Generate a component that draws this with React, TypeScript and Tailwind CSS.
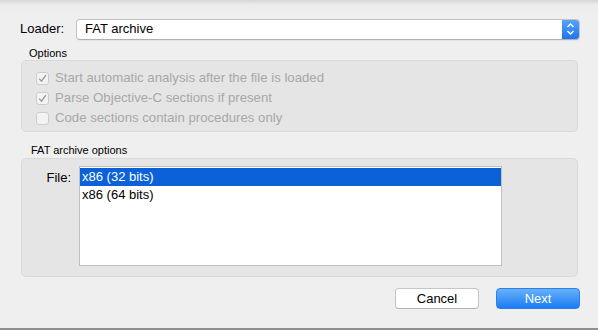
import { useState } from 'react';

const font = { fontFamily: '"Liberation Sans", Arial, sans-serif' };

function Check({ checked, label }: { checked: boolean; label: string }) {
  return (
    <div className="flex items-center h-[20px] gap-[6px]">
      <span className="w-[13px] h-[13px] rounded-[3px] border border-[#cdcdcd] bg-[#f3f3f3] flex items-center justify-center">
        {checked && (
          <svg width="9" height="9" viewBox="0 0 9 9">
            <path d="M1.2 4.6 L3.5 7.2 L7.9 1.2" fill="none" stroke="#9a9a9a" strokeWidth="1.4" />
          </svg>
        )}
      </span>
      <span className="text-[13.2px] leading-[16px] text-[#a8a8a8]">{label}</span>
    </div>
  );
}

export default function App() {
  const [selected, setSelected] = useState(0);
  const files = ['x86 (32 bits)', 'x86 (64 bits)'];

  return (
    <div
      style={font}
      className="w-[598px] h-[330px] overflow-hidden flex flex-col bg-[linear-gradient(to_bottom,#d6d6d6_0px,#ececec_5px,#efefef_12px)] border-b-2 border-[#8f8f8f] pl-[20px] pr-[18px] pt-[18px]"
    >
      {/* loader row */}
      <div className="flex items-center h-[22px]">
        <span className="text-[13px] text-black w-[56px]">Loader:</span>
        <div className="flex-1 h-[21px] flex items-center bg-white rounded-[4px] border border-[#c3c3c3] border-b-[#b0b0b0] shadow-[0_1px_0_rgba(0,0,0,0.04)] overflow-hidden">
          <span className="flex-1 pl-[8px] text-[13px] text-black">FAT archive</span>
          <div className="w-[17px] h-[22px] -my-px bg-[linear-gradient(to_bottom,#5ba9fb,#1a72ef)] flex items-center justify-center">
            <svg width="9" height="14" viewBox="0 0 9 14">
              <path d="M1.5 5 L4.5 2 L7.5 5 M1.5 9 L4.5 12 L7.5 9" fill="none" stroke="white" strokeWidth="1.4" />
            </svg>
          </div>
        </div>
      </div>

      {/* options */}
      <div className="mt-[7px] ml-[9px] text-[11px] leading-[13px] text-black">Options</div>
      <div className="mt-0 ml-px mr-[2px] h-[72px] rounded-[5px] bg-[#e5e5e5] border border-[#dadada] pl-[14px] pt-[7px]">
        <Check checked label="Start automatic analysis after the file is loaded" />
        <Check checked label="Parse Objective-C sections if present" />
        <Check checked={false} label="Code sections contain procedures only" />
      </div>

      {/* fat archive options */}
      <div className="mt-[12px] ml-[11px] text-[11px] leading-[13px] text-black">FAT archive options</div>
      <div className="mt-px ml-px mr-[2px] h-[119px] rounded-[5px] bg-[#e5e5e5] border border-[#dadada] flex pt-[7px]">
        <span className="w-[57px] text-right pr-[8px] text-[13px] text-black pt-[2px]">File:</span>
        <div className="w-[423px] h-[100px] bg-white border border-[#c0c0c0] pt-px">
          {files.map((f, i) => (
            <div
              key={f}
              onClick={() => setSelected(i)}
              className={
                i === selected
                  ? 'h-[18px] flex items-center pl-[2px] text-[13px] bg-[#0b62d8] text-white'
                  : 'h-[18px] flex items-center pl-[2px] text-[13px] text-black'
              }
            >
              {f}
            </div>
          ))}
        </div>
      </div>

      {/* buttons */}
      <div className="flex justify-end gap-[17px] mt-[11px]">
        <button className="w-[84px] h-[21px] rounded-[4px] bg-white border border-[#c6c6c6] border-b-[#b3b3b3] text-[13px] text-black">
          Cancel
        </button>
        <button className="w-[84px] h-[21px] rounded-[4px] bg-[linear-gradient(to_bottom,#68b1fb,#1b7cf4)] border border-[#2a7ef0] text-[13px] text-white">
          Next
        </button>
      </div>
    </div>
  );
}
